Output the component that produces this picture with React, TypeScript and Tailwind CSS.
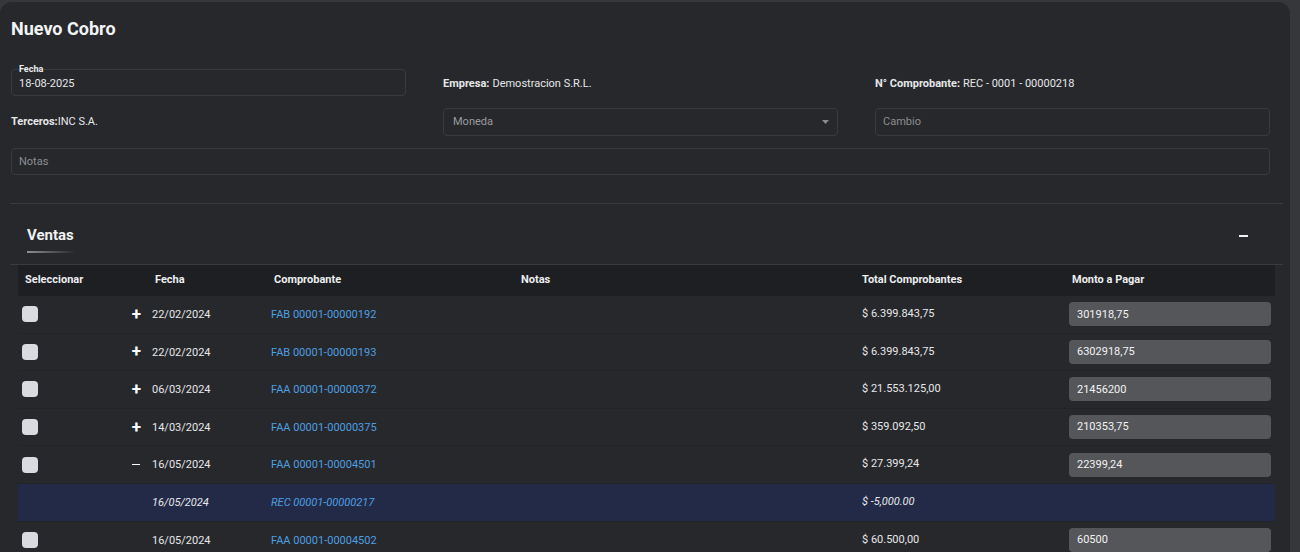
import React from "react";

type Row = {
  sign?: "+" | "-";
  fecha: string;
  comp: string;
  total: string;
  monto?: string;
  child?: boolean;
};

const rows: Row[] = [
  { sign: "+", fecha: "22/02/2024", comp: "FAB 00001-00000192", total: "$ 6.399.843,75", monto: "301918,75" },
  { sign: "+", fecha: "22/02/2024", comp: "FAB 00001-00000193", total: "$ 6.399.843,75", monto: "6302918,75" },
  { sign: "+", fecha: "06/03/2024", comp: "FAA 00001-00000372", total: "$ 21.553.125,00", monto: "21456200" },
  { sign: "+", fecha: "14/03/2024", comp: "FAA 00001-00000375", total: "$ 359.092,50", monto: "210353,75" },
  { sign: "-", fecha: "16/05/2024", comp: "FAA 00001-00004501", total: "$ 27.399,24", monto: "22399,24" },
  { fecha: "16/05/2024", comp: "REC 00001-00000217", total: "$ -5,000.00", child: true },
  { fecha: "16/05/2024", comp: "FAA 00001-00004502", total: "$ 60.500,00", monto: "60500" },
];

const cols = "grid grid-cols-[130px_119px_247px_341px_210px_210px]";

export default function App() {
  return (
    <div className="min-h-screen bg-[#36373a] pt-[2px] font-['Roboto',sans-serif] text-[11px] text-[#e6e7e9]">
      <div className="w-[1290px] rounded-t-xl bg-[#27282c] pb-10">
        {/* Title */}
        <div className="px-[11px] pt-[17px]">
          <h1 className="text-[18px] font-bold leading-[20px] text-[#f2f3f5]">Nuevo Cobro</h1>
        </div>

        {/* Form */}
        <div className="mt-[30px] grid grid-cols-[395px_395px_395px] gap-x-[37px] gap-y-[12px] px-[11px]">
          <div className="relative h-[27px] rounded-[4px] border border-[#3a3b40] px-[7px] flex items-center">
            <span className="absolute -top-[6px] left-[7px] bg-[#27282c] text-[9px] font-bold leading-[10px] text-[#eceef0]">
              Fecha
            </span>
            <span className="pt-[4px]">18-08-2025</span>
          </div>
          <div className="flex items-center h-[27px] pt-[3px]">
            <span className="font-bold">Empresa:</span>
            <span className="ml-[3px]">Demostracion S.R.L.</span>
          </div>
          <div className="flex items-center h-[27px] pt-[3px]">
            <span className="font-bold">N° Comprobante:</span>
            <span className="ml-[3px]">REC - 0001 - 00000218</span>
          </div>

          <div className="flex items-center h-[28px] pt-[1px]">
            <span className="font-bold">Terceros:</span>
            <span>INC S.A.</span>
          </div>
          <div className="flex items-center justify-between h-[28px] rounded-[4px] border border-[#3a3b40] pl-[9px] pr-[8px] text-[#9a9b9f]">
            <span className="pt-[1px]">Moneda</span>
            <svg width="7" height="4" viewBox="0 0 7 4">
              <path d="M0 0h7L3.5 4z" fill="#8a8b8f" />
            </svg>
          </div>
          <div className="flex items-center h-[28px] rounded-[4px] border border-[#3a3b40] px-[7px] pt-[1px] text-[#8c8d91]">
            Cambio
          </div>

          <div className="col-span-3 flex items-center h-[27px] rounded-[4px] border border-[#3a3b40] px-[7px] pt-[1px] text-[#8c8d91]">
            Notas
          </div>
        </div>

        {/* Ventas section */}
        <div className="mt-[28px] ml-[10px] w-[1273px] border-t border-[#3a3b3f]">
          <div className="flex items-center justify-between h-[61px] pl-[17px] pr-[35px] border-b border-[#3a3b3f]">
            <div className="flex flex-col pt-[10px]">
              <span className="text-[15px] font-bold leading-[18px] text-[#f0f1f3]">Ventas</span>
              <span className="mt-[7px] h-[2px] w-[48px] bg-gradient-to-r from-[#8e8f93] to-transparent" />
            </div>
            <span className="mt-[4px] h-[2px] w-[9px] bg-[#f0f0f0]" />
          </div>
        </div>

        <div className="ml-[18px] w-[1257px]">
          <div className={`${cols} h-[31px] items-center bg-[#1e1f22] font-bold text-[#eceef0]`}>
            <span className="pl-[7px]">Seleccionar</span>
            <span className="pl-[7px]">Fecha</span>
            <span className="pl-[7px]">Comprobante</span>
            <span className="pl-[7px]">Notas</span>
            <span className="pl-[7px]">Total Comprobantes</span>
            <span className="pl-[7px]">Monto a Pagar</span>
          </div>

          {rows.map((r, i) => (
            <div
              key={i}
              className={`${cols} h-[37.6px] items-center border-b border-[#232427] ${
                r.child ? "bg-[#232a47] italic" : ""
              }`}
            >
              <div className="flex items-center justify-between pl-[4px] pr-[7px]">
                {r.child ? <span /> : <span className="h-[16px] w-[16px] rounded-[4px] bg-[#d9dbe0]" />}
                {r.sign === "+" && <span className="text-[17px] font-bold leading-none text-white">+</span>}
                {r.sign === "-" && <span className="h-[1.5px] w-[8px] mr-[1px] bg-white" />}
              </div>
              <span className="pl-[4px] pt-[2px]">{r.fecha}</span>
              <span className="pl-[4px] pt-[2px] text-[#4d9fe0]">{r.comp}</span>
              <span />
              <span className="pl-[7px]">{r.total}</span>
              <div className="pl-[4px] pr-[4px]">
                {r.monto && (
                  <div className="flex h-[24px] items-center rounded-[4px] bg-[#55565a] px-[8px] pt-[1px] text-[#f2f2f2]">
                    {r.monto}
                  </div>
                )}
              </div>
            </div>
          ))}
        </div>
      </div>
    </div>
  );
}
